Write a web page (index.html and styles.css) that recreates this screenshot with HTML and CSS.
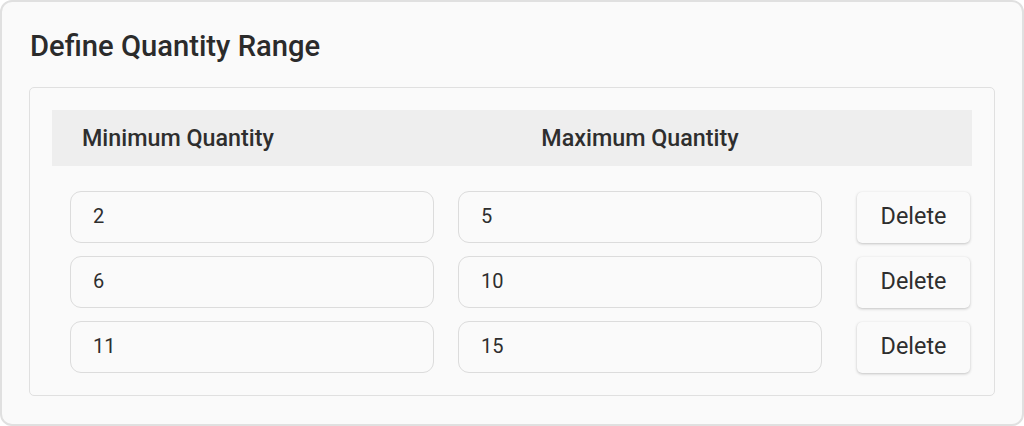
FILE: index.html
```html
<!DOCTYPE html>
<html lang="en">
<head>
<meta charset="utf-8">
<title>Define Quantity Range</title>
<link rel="stylesheet" href="styles.css">
</head>
<body>
<div class="card">
  <h2 class="title">Define Quantity Range</h2>
  <div class="panel">
    <div class="grid head">
      <div class="th th-min">Minimum Quantity</div>
      <div class="th th-max">Maximum Quantity</div>
      <div class="th"></div>
    </div>
    <div class="rows">
      <div class="grid row">
        <div class="input">2</div>
        <div class="input">5</div>
        <button class="btn">Delete</button>
      </div>
      <div class="grid row">
        <div class="input">6</div>
        <div class="input">10</div>
        <button class="btn">Delete</button>
      </div>
      <div class="grid row">
        <div class="input">11</div>
        <div class="input">15</div>
        <button class="btn">Delete</button>
      </div>
    </div>
  </div>
</div>
</body>
</html>
```
FILE: styles.css
```css
* { box-sizing: border-box; }
html, body { margin: 0; padding: 0; background: #ffffff; }
body {
  font-family: Roboto, "Liberation Sans", Arial, sans-serif;
  color: #2e2e2e;
}
.card {
  width: 1024px;
  height: 426px;
  background: #fafafa;
  border: 2px solid #e0e0e0;
  border-radius: 12px;
  padding: 24px 27px 27px 27px;
}
.title {
  margin: 0 0 20px 1px;
  font-size: 29.2px;
  font-weight: 500;
  line-height: 41px;
  color: #2b2b2b;
}
.panel {
  border: 1px solid #e0e0e0;
  border-radius: 5px;
  padding: 22px 22px 22px 22px;
}
.grid {
  display: grid;
  grid-template-columns: 364px 364px 1fr;
  column-gap: 24px;
  padding: 0 2px 0 18px;
}
.head {
  background: #eeeeee;
  height: 56px;
  align-items: center;
}
.th {
  font-size: 23.3px;
  font-weight: 500;
  color: #2e2e2e;
}
.th-min { padding-left: 12px; }
.th-max { text-align: center; }
.rows {
  display: flex;
  flex-direction: column;
  gap: 13px;
  margin-top: 25px;
}
.row { align-items: center; }
.input {
  height: 52px;
  border: 1px solid #dcdcdc;
  border-radius: 11px;
  background: #fafafa;
  padding: 0 0 3px 22px;
  display: flex;
  align-items: center;
  font-size: 20px;
  color: #2e2e2e;
}
.btn {
  justify-self: end;
  width: 113px;
  height: 51px;
  border: none;
  border-radius: 5px;
  background: #fafafa;
  box-shadow: 0 1px 3px rgba(0, 0, 0, 0.22), 0 0 1px rgba(0, 0, 0, 0.06);
  font-family: Roboto, "Liberation Sans", Arial, sans-serif;
  font-size: 23.4px;
  color: #2e2e2e;
  padding: 0 0 2px 0;
}
```
